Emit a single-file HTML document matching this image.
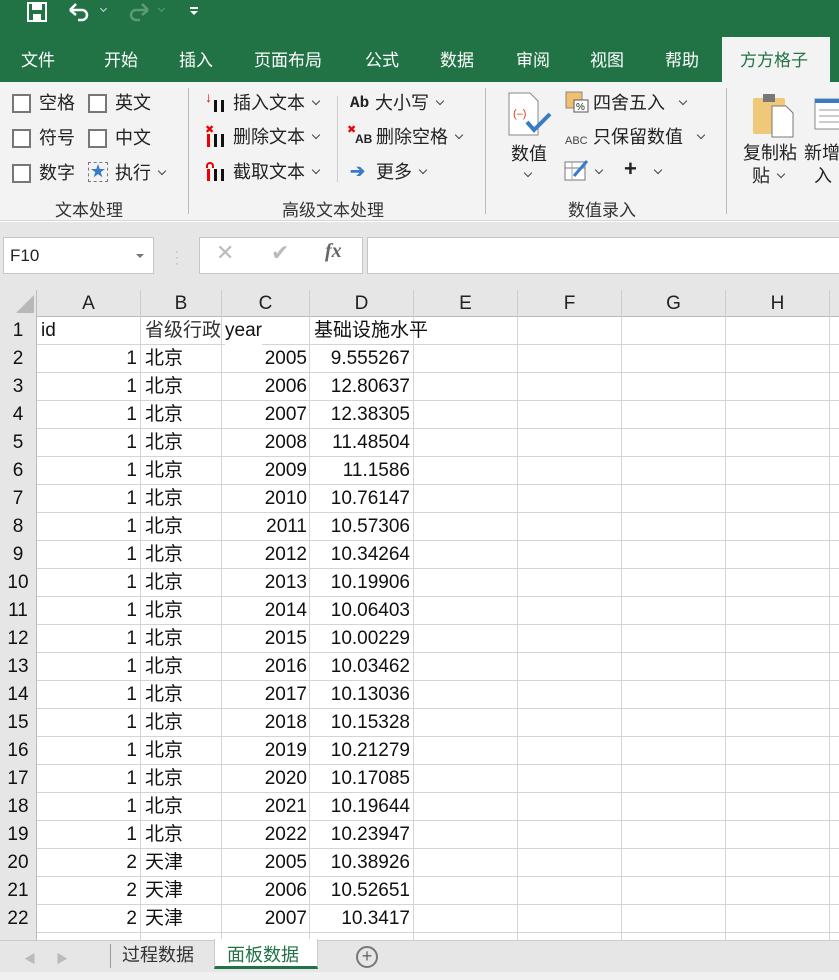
<!DOCTYPE html><html><head><meta charset="utf-8"><style>
*{margin:0;padding:0;box-sizing:border-box}
body{width:839px;height:980px;overflow:hidden;background:#fff;font-family:"Liberation Sans","Noto Sans CJK SC",sans-serif;position:relative}
.a{position:absolute}
.tab{position:absolute;top:46px;color:#fff;font-size:17px}
.rb{font-size:18px;color:#222;position:absolute;line-height:22px;white-space:nowrap}
.cb{position:absolute;width:19px;height:19px;border:2px solid #777;background:#fff}
.grp{position:absolute;top:196px;font-size:17px;color:#333}
.sep{position:absolute;top:88px;width:1px;height:126px;background:#bbb}
.c{position:absolute;font-size:19px;color:#111;height:28px;line-height:28px;white-space:nowrap;overflow:hidden}
.chev{display:inline-block;width:6px;height:6px;border-right:1.5px solid #444;border-bottom:1.5px solid #444;transform:rotate(45deg);vertical-align:middle;margin:0 0 6px 8px}
.ch{position:absolute;width:6px;height:6px;border-right:1.5px solid #444;border-bottom:1.5px solid #444;transform:rotate(45deg)}
</style></head><body>
<div class="a" style="left:0;top:0;width:839px;height:82px;background:#217346"></div>
<svg class="a" style="left:26px;top:1px" width="22" height="22" viewBox="0 0 22 22"><rect x="2" y="2" width="18" height="18" fill="none" stroke="#fff" stroke-width="2"/><rect x="6" y="3" width="10" height="6" fill="#fff"/><rect x="7" y="13" width="8" height="6" fill="#fff"/></svg>
<svg class="a" style="left:68px;top:2px" width="24" height="20" viewBox="0 0 24 20"><path d="M4 8 H14 A5 5 0 0 1 14 18 H10" fill="none" stroke="#fff" stroke-width="2.5"/><path d="M2 8 L8 2 M2 8 L8 13" stroke="#fff" stroke-width="2.5" fill="none"/></svg>
<div class="ch" style="left:101px;top:6px;border-color:#cde;width:5px;height:5px"></div>
<svg class="a" style="left:126px;top:2px" width="24" height="20" viewBox="0 0 24 20"><path d="M20 8 H10 A5 5 0 0 0 10 18 H14" fill="none" stroke="#5f9a78" stroke-width="2.5"/><path d="M22 8 L16 2 M22 8 L16 13" stroke="#5f9a78" stroke-width="2.5" fill="none"/></svg>
<div class="ch" style="left:159px;top:6px;border-color:#5f9a78;width:5px;height:5px"></div>
<div class="a" style="left:190px;top:7px;width:8px;height:2px;background:#fff"></div><div class="a" style="left:190px;top:11px;width:0;height:0;border-left:4px solid transparent;border-right:4px solid transparent;border-top:4px solid #fff"></div>
<div class="tab" style="left:21px">文件</div><div class="tab" style="left:104px">开始</div><div class="tab" style="left:179px">插入</div><div class="tab" style="left:254px">页面布局</div><div class="tab" style="left:365px">公式</div><div class="tab" style="left:440px">数据</div><div class="tab" style="left:516px">审阅</div><div class="tab" style="left:590px">视图</div><div class="tab" style="left:665px">帮助</div>
<div class="a" style="left:722px;top:37px;width:108px;height:45px;background:#f3f3f3"></div>
<div class="tab" style="left:740px;color:#217346">方方格子</div>
<div class="a" style="left:0;top:82px;width:839px;height:139px;background:#f3f3f3;border-bottom:1px solid #d6d6d6"></div>
<div class="cb" style="left:12px;top:94px"></div><div class="rb" style="left:39px;top:92px">空格</div>
<div class="cb" style="left:88px;top:94px"></div><div class="rb" style="left:115px;top:92px">英文</div>
<div class="cb" style="left:12px;top:129px"></div><div class="rb" style="left:39px;top:127px">符号</div>
<div class="cb" style="left:88px;top:129px"></div><div class="rb" style="left:115px;top:127px">中文</div>
<div class="cb" style="left:12px;top:164px"></div><div class="rb" style="left:39px;top:162px">数字</div>
<div class="a" style="left:88px;top:162px;width:20px;height:20px;border:1px dashed #777;color:#3a7bc8;font-size:15px;text-align:center;line-height:18px">★</div><div class="rb" style="left:115px;top:162px">执行<span class="chev"></span></div>
<div class="grp" style="left:55px">文本处理</div>
<div class="sep" style="left:188px"></div>
<div class="a" style="left:205px;top:90px;color:#e00;font-size:14px;line-height:14px">↓</div><div class="a" style="left:214px;top:100px;width:3px;height:12px;background:#111"></div><div class="a" style="left:221px;top:100px;width:3px;height:12px;background:#111"></div>
<div class="rb" style="left:233px;top:92px">插入文本<span class="chev"></span></div>
<div class="a" style="left:205px;top:123px;color:#e00;font-size:11px">✖</div><div class="a" style="left:207px;top:134px;width:3px;height:13px;background:#e00"></div><div class="a" style="left:214px;top:134px;width:3px;height:13px;background:#111"></div><div class="a" style="left:221px;top:134px;width:3px;height:13px;background:#111"></div>
<div class="rb" style="left:233px;top:126px">删除文本<span class="chev"></span></div>
<div class="a" style="left:206px;top:162px;width:8px;height:6px;border:2px solid #e00;border-bottom:none;border-radius:4px 4px 0 0"></div><div class="a" style="left:207px;top:169px;width:3px;height:12px;background:#e00"></div><div class="a" style="left:214px;top:169px;width:3px;height:12px;background:#111"></div><div class="a" style="left:221px;top:169px;width:3px;height:12px;background:#111"></div>
<div class="rb" style="left:233px;top:161px">截取文本<span class="chev"></span></div>
<div class="sep" style="left:337px;top:96px;height:86px;background:#ccc"></div>
<div class="rb" style="left:350px;top:92px;font-family:'Liberation Mono',monospace;font-weight:bold;font-size:16px">Ab</div><div class="rb" style="left:375px;top:92px">大小写<span class="chev"></span></div>
<div class="a" style="left:347px;top:123px;color:#e00;font-size:11px">✖</div><div class="rb" style="left:355px;top:128px;font-size:12px;font-weight:bold">AB</div><div class="rb" style="left:376px;top:126px">删除空格<span class="chev"></span></div>
<div class="rb" style="left:350px;top:160px;color:#3a7bc8;font-weight:bold">➔</div><div class="rb" style="left:376px;top:161px">更多<span class="chev"></span></div>
<div class="grp" style="left:282px">高级文本处理</div>
<div class="sep" style="left:485px"></div>
<svg class="a" style="left:508px;top:92px" width="44" height="45" viewBox="0 0 44 45"><path d="M1 1 H22 L30 9 V43 H1 Z" fill="#fff" stroke="#888"/><text x="5" y="25" font-size="11" fill="#d04020" font-family="Liberation Sans">(–)</text><path d="M19 30 L26 38 L42 22" fill="none" stroke="#3a7bc8" stroke-width="4"/></svg>
<div class="rb" style="left:511px;top:143px">数值</div><div class="ch" style="left:525px;top:170px"></div>
<svg class="a" style="left:565px;top:91px" width="24" height="22"><rect x="1" y="1" width="16" height="16" fill="#f0c070" stroke="#888"/><rect x="9" y="9" width="14" height="12" fill="#fff" stroke="#555"/><text x="11" y="19" font-size="10" fill="#222">%</text></svg>
<div class="rb" style="left:593px;top:92px">四舍五入</div><div class="ch" style="left:680px;top:98px"></div>
<div class="rb" style="left:565px;top:130px;font-size:11px;color:#444">ABC</div><div class="rb" style="left:593px;top:126px">只保留数值</div><div class="ch" style="left:698px;top:132px"></div>
<svg class="a" style="left:564px;top:158px" width="26" height="24"><rect x="1" y="4" width="20" height="18" fill="#fff" stroke="#777"/><line x1="1" y1="10" x2="21" y2="10" stroke="#777"/><line x1="8" y1="4" x2="8" y2="22" stroke="#aaa"/><path d="M10 18 L23 3" stroke="#3a7bc8" stroke-width="3"/></svg>
<div class="ch" style="left:596px;top:167px"></div><div class="rb" style="left:624px;top:158px;font-weight:bold;font-size:22px">+</div><div class="ch" style="left:655px;top:167px"></div>
<div class="grp" style="left:568px">数值录入</div>
<div class="sep" style="left:726px"></div>
<svg class="a" style="left:752px;top:92px" width="44" height="46"><rect x="1" y="6" width="32" height="36" rx="2" fill="#f0c87a"/><rect x="11" y="2" width="12" height="8" fill="#777"/><path d="M20 14 H34 L41 21 V45 H20 Z" fill="#fff" stroke="#777"/></svg>
<div class="rb" style="left:743px;top:142px">复制粘</div><div class="rb" style="left:752px;top:165px">贴<span class="chev"></span></div>
<svg class="a" style="left:814px;top:98px" width="30" height="36"><rect x="1" y="1" width="30" height="30" fill="#fff" stroke="#888"/><rect x="1" y="1" width="30" height="4" fill="#3a7bc8"/><line x1="5" y1="12" x2="28" y2="12" stroke="#999"/><line x1="5" y1="18" x2="28" y2="18" stroke="#999"/><line x1="5" y1="24" x2="28" y2="24" stroke="#999"/></svg>
<div class="rb" style="left:804px;top:142px">新增</div><div class="rb" style="left:814px;top:165px">入</div>
<div class="a" style="left:0;top:222px;width:839px;height:68px;background:#e6e6e6"></div>
<div class="a" style="left:3px;top:237px;width:151px;height:37px;background:#fff;border:1px solid #c6c6c6;font-size:17px;line-height:35px;padding-left:6px;color:#222">F10</div>
<div class="a" style="left:136px;top:254px;border-left:4px solid transparent;border-right:4px solid transparent;border-top:4px solid #777"></div>
<div class="a" style="left:175px;top:248px;color:#aaa;font-size:12px;line-height:6px">·<br>·<br>·</div>
<div class="a" style="left:199px;top:237px;width:164px;height:37px;background:#fff;border:1px solid #c6c6c6"></div>
<div class="a" style="left:216px;top:240px;color:#bbb;font-size:22px">✕</div><div class="a" style="left:271px;top:240px;color:#bbb;font-size:22px">✔</div>
<div class="a" style="left:325px;top:240px;color:#666;font-size:20px;font-family:'Liberation Serif',serif;font-style:italic;font-weight:bold">fx</div>
<div class="a" style="left:367px;top:237px;width:480px;height:37px;background:#fff;border:1px solid #c6c6c6"></div>
<div class="a" style="left:0;top:290px;width:839px;height:27px;background:#e6e6e6;border-bottom:1px solid #bbb"></div>
<div class="a" style="left:0;top:290px;width:37px;height:650px;background:#e6e6e6;border-right:1px solid #bbb"></div>
<svg class="a" style="left:14px;top:293px" width="22" height="22"><path d="M20 2 V20 H2 Z" fill="#b8b8b8"/></svg>
<div id="g"></div>
<script>
var cols=[37,141,222,310,414,518,622,726,830],L="ABCDEFGH",h='';
for(var i=0;i<8;i++){h+='<div class="a" style="left:'+cols[i]+'px;top:290px;width:'+(cols[i+1]-cols[i])+'px;height:27px;border-right:1px solid #ccc;text-align:center;font-size:19px;line-height:27px;color:#222">'+L[i]+'</div>';}
for(var r=1;r<=22;r++){var t=317+28*(r-1);h+='<div class="a" style="left:37px;top:'+(t+27)+'px;width:802px;height:1px;background:#d4d4d4"></div>';h+='<div class="c" style="left:0;top:'+t+'px;width:36px;text-align:center">'+r+'</div>';}
for(var i=1;i<9;i++)h+='<div class="a" style="left:'+(cols[i]-1)+'px;top:317px;width:1px;height:623px;background:#d4d4d4"></div>';
var d=[["9.555267"],["12.80637"],["12.38305"],["11.48504"],["11.1586"],["10.76147"],["10.57306"],["10.34264"],["10.19906"],["10.06403"],["10.00229"],["10.03462"],["10.13036"],["10.15328"],["10.21279"],["10.17085"],["10.19644"],["10.23947"],["10.38926"],["10.52651"],["10.3417"]];
h+='<div class="c" style="left:41px;top:317px">id</div><div class="c" style="left:145px;top:317px;width:76px;color:#333">省级行政</div><div class="c" style="left:225px;top:317px;background:#fff">year</div><div class="c" style="left:314px;top:317px">基础设施水平</div>';
for(var k=0;k<21;k++){var t=345+28*k,y=k<18?2005+k:2005+k-18,id=k<18?1:2,nm=k<18?'北京':'天津';
h+='<div class="c" style="left:37px;top:'+t+'px;width:100px;text-align:right">'+id+'</div><div class="c" style="left:145px;top:'+t+'px">'+nm+'</div><div class="c" style="left:222px;top:'+t+'px;width:85px;text-align:right">'+y+'</div><div class="c" style="left:310px;top:'+t+'px;width:100px;text-align:right">'+d[k]+'</div>';}
document.getElementById('g').innerHTML=h;
</script>
<div class="a" style="left:0;top:940px;width:839px;height:40px;background:#e6e6e6;border-top:1px solid #ccc"></div>
<div class="a" style="left:24px;top:950px;color:#bbb;font-size:12px">◀</div><div class="a" style="left:56px;top:950px;color:#bbb;font-size:12px">▶</div>
<div class="a" style="left:110px;top:944px;width:1px;height:24px;background:#999"></div>
<div class="a" style="left:122px;top:941px;font-size:18px;color:#333">过程数据</div>
<div class="a" style="left:214px;top:939px;width:104px;height:30px;background:#fff;border-bottom:3px solid #217346;border-left:1px solid #ccc;border-right:1px solid #ccc"></div>
<div class="a" style="left:227px;top:941px;font-size:18px;color:#217346">面板数据</div>
<div class="a" style="left:356px;top:946px;width:22px;height:22px;border:2px solid #777;border-radius:50%;text-align:center;line-height:17px;font-size:18px;color:#666">+</div>
<div class="a" style="left:0;top:972px;width:839px;height:8px;background:#f0f0f0"></div>
</body></html>
